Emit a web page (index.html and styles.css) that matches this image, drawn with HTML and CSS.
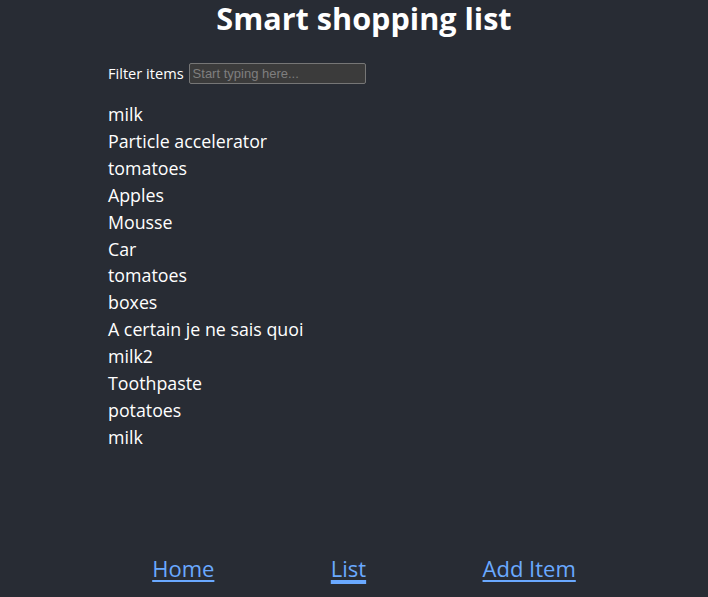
FILE: index.html
```html
<!DOCTYPE html>
<html>
<head>
<meta charset="utf-8">
<link rel="stylesheet" href="styles.css">
</head>
<body>
<div class="app">
  <h1 class="title">Smart shopping list</h1>
  <main class="content">
    <label class="filter">Filter items <input class="filter-input" type="text" placeholder="Start typing here..."></label>
    <ul class="items">
      <li>milk</li>
      <li>Particle accelerator</li>
      <li>tomatoes</li>
      <li>Apples</li>
      <li>Mousse</li>
      <li>Car</li>
      <li>tomatoes</li>
      <li>boxes</li>
      <li>A certain je ne sais quoi</li>
      <li>milk2</li>
      <li>Toothpaste</li>
      <li>potatoes</li>
      <li>milk</li>
    </ul>
  </main>
  <nav class="nav">
    <a class="nav-link" href="#">Home</a>
    <a class="nav-link active" href="#">List</a>
    <a class="nav-link" href="#">Add Item</a>
  </nav>
</div>
</body>
</html>
```
FILE: styles.css
```css
html, body {
  margin: 0;
  padding: 0;
  background: #282c34;
  height: 100%;
}
body {
  font-family: "Open Sans", "Noto Sans", sans-serif;
  color: #ffffff;
}
.app {
  height: 597px;
  display: flex;
  flex-direction: column;
  padding-left: 20px;
  box-sizing: border-box;
}
.title {
  margin: 0;
  font-size: 30.6px;
  font-weight: 700;
  line-height: 37px;
  text-align: center;
}
.content {
  width: 512px;
  margin: 0 auto;
  flex: 1;
  padding-top: 25px;
}
.filter {
  font-size: 14.6px;
  display: flex;
  align-items: center;
  gap: 4px;
  height: 22px;
}
.filter-input {
  width: 177px;
  height: 21px;
  box-sizing: border-box;
  background: #3b3b3b;
  border: 1px solid #767676;
  border-radius: 2px;
  color: #fff;
  font-family: "Liberation Sans", Arial, sans-serif;
  font-size: 13px;
  padding: 1px 3px;
  margin: 0 0 0 1px;
}
.filter-input::placeholder {
  color: #7f7f7f;
}
.items {
  list-style: none;
  margin: 17px 0 0 0;
  padding: 0;
  font-size: 17.8px;
  line-height: 26.9px;
}
.nav {
  width: 540px;
  margin: 0 auto 14px;
  display: flex;
  justify-content: space-around;
  font-size: 22px;
  line-height: 30px;
}
.nav-link {
  color: #6aa9ff;
  text-decoration: underline;
  text-underline-offset: 3px;
}
.nav-link.active {
  text-decoration-thickness: 4px;
}
```
